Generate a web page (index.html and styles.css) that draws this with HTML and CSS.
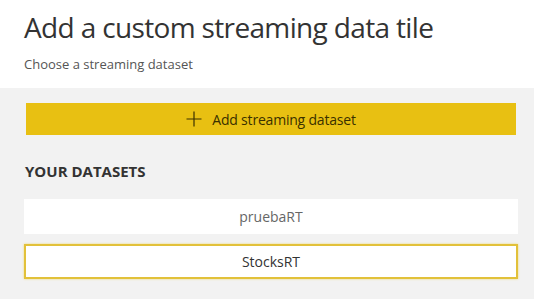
FILE: index.html
```html
<!DOCTYPE html>
<html>
<head>
<meta charset="utf-8">
<link rel="stylesheet" href="styles.css">
</head>
<body>
<header class="head">
  <h1 class="title">Add a custom streaming data tile</h1>
  <p class="subtitle">Choose a streaming dataset</p>
</header>
<main class="panel">
  <button class="add-btn">
    <svg class="plus" width="16" height="16" viewBox="0 0 16 16"><path d="M8 0.5V15.5M0.5 8H15.5" stroke="#3a3000" stroke-width="1.2" fill="none"/></svg>
    <span>Add streaming dataset</span>
  </button>
  <h2 class="section">YOUR DATASETS</h2>
  <div class="list">
    <div class="item">pruebaRT</div>
    <div class="item selected">StocksRT</div>
  </div>
</main>
</body>
</html>
```

FILE: styles.css
```css
html, body {
  margin: 0;
  padding: 0;
  background: #f2f2f2;
  font-family: "Open Sans", "Noto Sans", sans-serif;
  width: 534px;
  height: 299px;
  overflow: hidden;
}
.head {
  background: #ffffff;
  height: 88px;
  padding: 0 0 0 24px;
  box-sizing: border-box;
}
.title {
  margin: 0;
  padding-top: 7px;
  font-size: 28px;
  font-weight: 400;
  color: #333333;
  line-height: 40px;
  letter-spacing: -0.65px;
}
.subtitle {
  margin: 8px 0 0 0;
  font-size: 13px;
  line-height: 18px;
  color: #555555;
}
.panel {
  padding: 15px 18px 0 24px;
}
.add-btn {
  display: flex;
  align-items: center;
  justify-content: center;
  gap: 10px;
  width: 490px;
  height: 32px;
  margin-left: 2px;
  border: none;
  background: #e8c012;
  font-family: inherit;
  font-size: 14px;
  letter-spacing: -0.2px;
  color: #3a3000;
  padding: 0;
}
.plus {
  display: block;
}
.section {
  margin: 27px 0 0 1px;
  font-size: 15px;
  font-weight: 700;
  color: #333333;
  line-height: 18px;
}
.list {
  display: flex;
  flex-direction: column;
  gap: 10px;
  margin-top: 19px;
}
.item {
  width: 494px;
  height: 35px;
  box-sizing: border-box;
  background: #ffffff;
  display: flex;
  align-items: center;
  justify-content: center;
  font-size: 14px;
  color: #666666;
}
.item.selected {
  border: 2px solid #e2c13a;
  box-shadow: 0 0 2px #f0d870;
  color: #333333;
}
```
